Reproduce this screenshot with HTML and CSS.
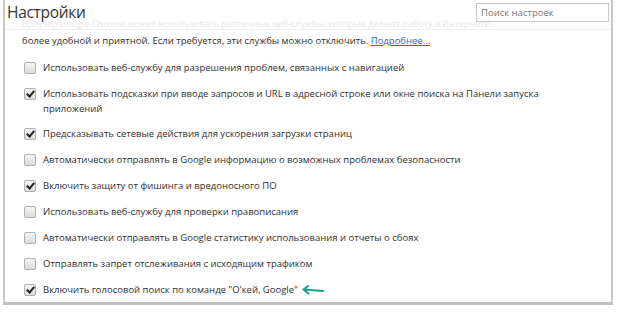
FILE: index.html
```html
<!DOCTYPE html>
<html>
    <head>
        <title>Настройки</title>
        <link rel="stylesheet" href="styles.css">
    </head>
    <body>
        <div class='frame'>
            <header class='topbar'>
                <h1 class='titulo'>Настройки</h1>
                <input type='text' class='busca' placeholder='Поиск настроек'>
                <div class='fantasma'>Браузер Google Chrome может использовать различные веб-службы, которые делают работу в Интернете</div>
            </header>
            <div class='wrapper'>
                <p class='intro'>более удобной и приятной. Если требуется, эти службы можно отключить. <a href='#'>Подробнее...</a></p>
                <ul class='opcoes'>
                    <li><span class='caixa'></span><span>Использовать веб-службу для разрешения проблем, связанных с навигацией</span></li>
                    <li><span class='caixa marcada'></span><span>Использовать подсказки при вводе запросов и URL в адресной строке или окне поиска на Панели запуска приложений</span></li>
                    <li><span class='caixa marcada'></span><span>Предсказывать сетевые действия для ускорения загрузки страниц</span></li>
                    <li><span class='caixa'></span><span>Автоматически отправлять в Google информацию о возможных проблемах безопасности</span></li>
                    <li><span class='caixa marcada'></span><span>Включить защиту от фишинга и вредоносного ПО</span></li>
                    <li><span class='caixa'></span><span>Использовать веб-службу для проверки правописания</span></li>
                    <li><span class='caixa'></span><span>Автоматически отправлять в Google статистику использования и отчеты о сбоях</span></li>
                    <li><span class='caixa'></span><span>Отправлять запрет отслеживания с исходящим трафиком</span></li>
                    <li><span class='caixa marcada'></span><span>Включить голосовой поиск по команде "О'кей, Google"</span>
                        <svg class='seta' width='24' height='10' viewBox='0 0 24 10'>
                            <path d='M22 6 L3 4.5 M7 1 L2.5 4.5 L7.5 8.5' stroke='#16a08f' stroke-width='2' fill='none' stroke-linecap='round' stroke-linejoin='round'/>
                        </svg>
                    </li>
                </ul>
            </div>
        </div>
    </body>
</html>
```

FILE: styles.css
```css
body{
    margin: 0;
    background-color: white;
    font-family: "Open Sans", "Noto Sans", sans-serif;
    color: #303030;
}
.frame{
    margin: 0 4px 0 3px;
    height: 305px;
    border-left: 2px solid #c8c8c8;
    border-right: 2px solid #c8c8c8;
    border-bottom: 3px solid #c0c0c0;
    box-sizing: border-box;
    overflow: hidden;
}
.topbar{
    position: relative;
    height: 29px;
    border-bottom: 1px solid #f0f0f0;
    display: flex;
    justify-content: space-between;
    align-items: flex-start;
    overflow: hidden;
}
.titulo{
    margin: 2px 0 0 2px;
    font-family: "Open Sans", "Noto Sans", sans-serif;
    font-weight: normal;
    font-size: 15.5px;
    letter-spacing: -0.3px;
    line-height: 20px;
    color: #333;
    position: relative;
    z-index: 1;
}
.busca{
    margin: 3px 2px 0 0;
    width: 133px;
    height: 19px;
    box-sizing: border-box;
    border: 1px solid #c8c8c8;
    padding: 0 4px;
    font-family: "Open Sans", "Noto Sans", sans-serif;
    font-size: 9.5px;
    position: relative;
    z-index: 1;
    background: white;
}
.busca::placeholder{
    color: #777;
}
.fantasma{
    position: absolute;
    left: 17px;
    top: 18px;
    font-size: 9px;
    line-height: 11px;
    color: #e6e6e6;
    white-space: nowrap;
}
.wrapper{
    padding: 0 0 0 17px;
}
.intro{
    margin: 4px 0 0 0;
    font-size: 9.5px;
    line-height: 14px;
}
.intro a{
    color: #1a6ad6;
}
.opcoes{
    list-style: none;
    margin: 12px 0 0 0;
    padding: 0;
}
.opcoes li{
    display: flex;
    align-items: flex-start;
    font-size: 9.5px;
    line-height: 15px;
    margin-bottom: 11px;
    padding-right: 40px;
}
.opcoes li:nth-child(2){
    margin-bottom: 10px;
}
.opcoes li:nth-child(n+4){
    margin-bottom: 11px;
}
.caixa{
    flex: none;
    width: 10px;
    height: 10px;
    margin: 2px 7px 0 2px;
    border: 1px solid #b0b0b0;
    border-radius: 2px;
    background: linear-gradient(#f4f4f4, #dcdcdc);
    position: relative;
}
.marcada::after{
    content: '';
    position: absolute;
    left: 3px;
    top: 0px;
    width: 3px;
    height: 6px;
    border-right: 2px solid #222;
    border-bottom: 2px solid #222;
    transform: rotate(40deg);
}
.seta{
    margin: 3px 0 0 3px;
}
```
